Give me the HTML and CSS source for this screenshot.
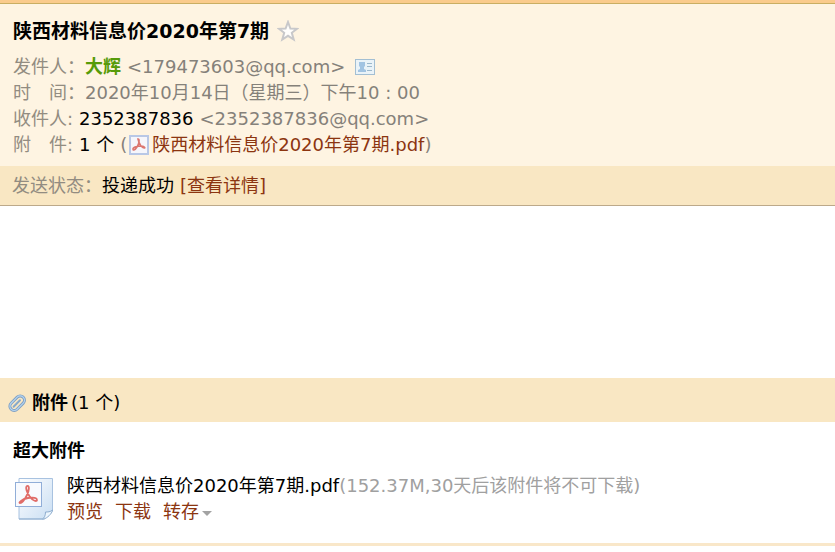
FILE: index.html
```html
<!DOCTYPE html>
<html lang="zh-CN">
<head>
    <meta charset="UTF-8">
    <meta name="viewport" content="width=device-width, initial-scale=1.0">
    <title>陕西材料信息价2020年第7期</title>
    <link rel="stylesheet" href="styles.css">
</head>
<body>
    <header class="mail-head">
        <div class="subject">
            <h1>陕西材料信息价2020年第7期</h1>
            <button class="star" type="button" aria-label="星标">
                <svg width="22" height="22" viewBox="0 0 22 22">
                    <path d="M11 2l2.400 6.500 6.600.3-5.200 4 1.900 6.700-5.700-3.700L5.300 19.500l1.900-6.700-5.200-4 6.600-.3z" fill="#fffefc" stroke="#c8c8ca" stroke-width="2"/>
                </svg>
            </button>
        </div>
        <div class="row">
            <span class="label">发件人：</span>
            <b class="sender">大辉</b>
            <span class="addr">&lt;179473603@qq.com&gt;</span>
            <button class="card" type="button" aria-label="名片">
                <svg width="20" height="16" viewBox="0 0 20 16">
                    <rect x=".5" y=".5" width="19" height="15" fill="#eaf3f8" stroke="#a3bfd3"/>
                    <path d="M3 13v-2l2-1V8L4 7V3h6v4L9 8v2l2 1v2z" fill="#a2c4e2"/>
                    <path d="M12 4.500h5M12 7.500h5M12 11.500h5" stroke="#9db9cc"/>
                </svg>
            </button>
        </div>
        <div class="row">
            <span class="label">时　间：</span>
            <span>2020年10月14日（星期三）下午10 : 00</span>
        </div>
        <div class="row">
            <span class="label short">收件人:</span>
            <span class="dark">2352387836</span>
            <span class="addr">&lt;2352387836@qq.com&gt;</span>
        </div>
        <div class="row">
            <span class="label short">附　件:</span>
            <span class="dark">1 个</span>
            <span class="file">(<svg width="20" height="20" viewBox="0 0 20 20">
                    <rect x="1" y="1" width="18" height="18" fill="#f6f6fb" stroke="#b9c8e6" stroke-width="2"/>
                    <path d="M9 4c2 0 1 5-1 8s-4 4-4 2 5-3 8-3 5 2 3 2-5-4-6-9z" fill="#e58f88" fill-opacity=".3" stroke="#dc7770" stroke-width="1.600"/>
                </svg><a href="#attachments">陕西材料信息价2020年第7期.pdf</a>)</span>
        </div>
    </header>
    <div class="status">
        <span class="label">发送状态：</span>
        <span class="dark">投递成功</span>
        <a class="detail" href="#detail">[查看详情]</a>
    </div>
    <main class="mail-body"></main>
    <section id="attachments">
        <div class="attach-head">
            <svg width="20" height="20" viewBox="0 0 20 20">
                <g transform="rotate(45 10 10)" fill="none">
                    <rect x="6" y="1.500" width="8.500" height="17" rx="4.200" stroke="#7f9fc2" stroke-width="3"/>
                    <rect x="6" y="1.500" width="8.500" height="17" rx="4.200" stroke="#b5d5f0" stroke-width="1.200"/>
                    <path d="M10.200 6v9" stroke="#86a9cb" stroke-width="2" stroke-linecap="round"/>
                </g>
            </svg>
            <h2>附件</h2><span>(1 个)</span>
        </div>
        <div class="attach-list">
            <h3>超大附件</h3>
            <div class="attach-item">
                <svg width="40" height="44" viewBox="0 0 40 44">
                    <defs>
                        <linearGradient id="paper" x1="0" y1="0" x2="1" y2="1">
                            <stop offset="0" stop-color="#fff"/>
                            <stop offset="1" stop-color="#c9def3"/>
                        </linearGradient>
                    </defs>
                    <path d="M5 1.500h33.500V34l-8 8H5z" fill="url(#paper)" stroke="#a8c2e0"/>
                    <path d="M5 42h25c3-1 8-5 8.500-9-2 2-5 2-7 2 0 3-1 6-3 7" fill="#edf6fd" stroke="#8faecf"/>
                    <rect x="1.500" y="5.500" width="26" height="24" fill="#f8fafe" stroke="#91aed8"/>
                    <path d="M13 9c3-1 2 5 0 9s-5 8-7 8 2-4 8-5 9 0 9 2-4 1-7-3-5-10-3-11z" fill="none" stroke="#e06c68" stroke-width="1.800"/>
                </svg>
                <div>
                    <div class="name">陕西材料信息价2020年第7期.pdf<span class="info">(152.37M,30天后该附件将不可下载)</span></div>
                    <div class="actions">
                        <a href="#preview">预览</a>
                        <a href="#download">下载</a>
                        <a class="more" href="#save">转存</a>
                    </div>
                </div>
            </div>
        </div>
    </section>
</body>
</html>
```
FILE: styles.css
```css
body {
    margin: 0;
    background-color: #fff;
    color: #000;
    font-family: "DejaVu Sans", "Noto Sans CJK SC", sans-serif;
    font-size: 18px;
    line-height: 26px;
}
h1, h2, h3 {
    margin: 0;
    font-size: 18px;
}
a {
    color: #8c3510;
    text-decoration: none;
}
button {
    display: flex;
    padding: 0;
    border: none;
    background: none;
    cursor: pointer;
}
.mail-head {
    padding: 15px 13px 8px;
    background-color: #fef4e2;
    border-top: 3px solid #facb8c;
    box-shadow: inset 0 1px #c9ae62;
    color: #85817a;
}
.subject {
    display: flex;
    align-items: center;
    gap: 8px;
    margin-bottom: 10px;
}
.subject h1 {
    color: #000;
    font-size: 19px;
}
.row {
    display: flex;
    align-items: center;
    white-space: nowrap;
}
.label {
    color: #928c81;
    min-width: 72px;
}
.label.short {
    min-width: 66px;
}
.sender {
    color: #579b09;
}
.addr {
    margin-left: 6px;
}
.card {
    margin-left: 10px;
}
.dark {
    color: #000;
}
.file {
    display: flex;
    align-items: center;
    margin-left: 6px;
}
.file svg {
    margin: 0 3px 0 2px;
}
.status {
    display: flex;
    padding: 7px 12px 6px;
    background-color: #f9e7c3;
    border-bottom: 1px solid #bca98a;
}
.status .label {
    min-width: 90px;
}
.detail {
    margin-left: 6px;
}
.mail-body {
    min-height: 172px;
}
.attach-head {
    display: flex;
    align-items: center;
    padding: 12px 7px 6px;
    background-color: #f9e7c3;
}
.attach-head h2 {
    margin: 0 3px 0 5px;
}
.attach-list {
    padding: 16px 13px 18px;
    border-bottom: 3px solid #f9e7c9;
}
.attach-item {
    display: flex;
    gap: 13px;
    margin-top: 9px;
}
.attach-item svg {
    margin: 4px 0 0 1px;
}
.info {
    color: #a0a0a0;
}
.actions {
    display: flex;
    gap: 12px;
}
.more::after {
    content: "";
    display: inline-block;
    margin-left: 3px;
    vertical-align: 2px;
    border: 5px solid transparent;
    border-top-color: #a3a3a3;
    border-bottom: none;
}
```
